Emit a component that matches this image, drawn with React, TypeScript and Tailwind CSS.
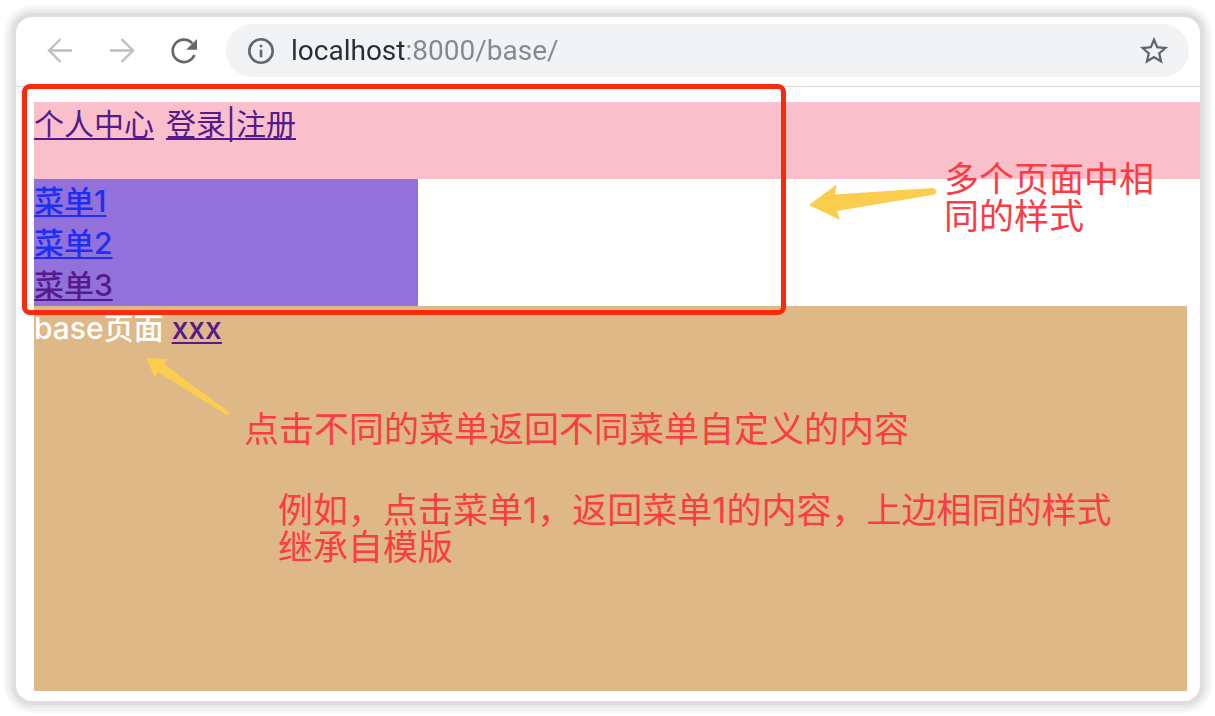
import type { ReactNode } from "react";
import { MdStarBorder } from "react-icons/md";

const visited = "text-[#551a8b] underline decoration-2 underline-offset-3 [text-decoration-skip-ink:none]";
const unvisited = "text-[#1f2ef0] underline decoration-2 underline-offset-3 [text-decoration-skip-ink:none]";

function ToolButton({ label, children }: { label: string; children: ReactNode }) {
  return (
    <button type="button" aria-label={label} className="grid size-8 shrink-0 place-items-center">
      {children}
    </button>
  );
}

function Toolbar() {
  return (
    <header className="flex items-center gap-[26px] border-b border-[#d8d8d8] pt-[7px] pr-[11px] pb-[9px] pl-7">
      <nav aria-label="Browser" className="flex items-center gap-[30px]">
        <ToolButton label="Back">
          <svg viewBox="0 0 32 32" className="size-8 fill-none stroke-[#bcbfc3]" strokeWidth="2.4">
            <path d="M28 15.500H5M16.500 4 5 15.500l11.500 11.500" />
          </svg>
        </ToolButton>
        <ToolButton label="Forward">
          <svg viewBox="0 0 32 32" className="size-8 fill-none stroke-[#bcbfc3]" strokeWidth="2.4">
            <path d="M4 15.500h23M15.500 4 27 15.500 15.500 27" />
          </svg>
        </ToolButton>
        <ToolButton label="Reload">
          <svg viewBox="0 0 32 32" className="size-8" aria-hidden="true">
            <path d="M24.200 8.300A11.200 11.200 0 1 0 26.300 20" fill="none" stroke="#63676c" strokeWidth="2.700" />
            <path d="M29 4v10.800H18.200z" fill="#63676c" />
          </svg>
        </ToolButton>
      </nav>
      <div className="flex h-[53px] min-w-0 flex-1 items-center rounded-full bg-[#f1f3f4] pr-[18px] pl-5">
        <button type="button" aria-label="Site information" className="shrink-0">
          <svg viewBox="0 0 30 30" className="size-[30px]">
            <circle cx="15" cy="15" r="11.700" fill="none" stroke="#63676c" strokeWidth="2.600" />
            <path d="M13.700 8.700h2.600v2.600h-2.600zM13.700 13.700h2.600v7.500h-2.600z" fill="#63676c" />
          </svg>
        </button>
        <input
          aria-label="Address"
          defaultValue="localhost:8000/base/"
          className="ml-[15px] h-10 min-w-0 flex-1 bg-[linear-gradient(90deg,#2a2d30_114px,#85898d_114px)] bg-clip-text font-[Roboto,sans-serif] text-[28px] text-transparent outline-none"
        />
        <button type="button" aria-label="Bookmark" className="shrink-0 text-[#63676c]">
          <MdStarBorder className="size-[34px]" />
        </button>
      </div>
    </header>
  );
}

function Note({ className, children }: { className: string; children: ReactNode }) {
  return (
    <p
      className={`absolute font-[Inter,'Noto_Sans_CJK_SC',sans-serif] text-[35px] leading-[37px] text-[#fb3c43] ${className}`}
    >
      {children}
    </p>
  );
}

export default function App() {
  return (
    <div className="flex min-h-screen flex-col bg-white pt-[17px] pr-[15px] pb-[15px] pl-4">
      <div className="flex flex-1 flex-col overflow-hidden rounded-2xl bg-white shadow-[0_0_0_4px_#dedede,0_0_0_7px_#e9e9e9,0_0_0_10px_#f3f3f3,0_0_0_12px_#f9f9f9]">
        <Toolbar />
        <main className="relative flex flex-1 flex-col pt-[15px] pb-[10px] pl-[18px] font-[Inter,'Noto_Sans_CJK_SC',sans-serif] text-[30px] leading-[42px]">
          <div className="flex h-[77px] items-start gap-3 bg-[#f9c0cb] pt-px">
            <a href="#center" className={visited}>个人中心</a>
            <a href="#login" className={visited}>登录|注册</a>
          </div>
          <nav aria-label="菜单" className="flex w-1/3 max-w-[384px] flex-col items-start bg-[#9371db] pt-px font-medium">
            <a href="#menu1" className={unvisited}>菜单1</a>
            <a href="#menu2" className={unvisited}>菜单2</a>
            <a href="#menu3" className={visited}>菜单3</a>
          </nav>
          <section className="mr-[13px] flex flex-1 items-start gap-2 bg-[#deb887] pt-px font-medium text-white">
            <span>base页面</span>
            <a href="#xxx" className={visited}>xxx</a>
          </section>

          <div className="absolute -top-[3px] left-[6px] h-[231px] w-[764px] rounded-lg border-[5px] border-[#fa2a0c]" />
          <svg viewBox="0 0 130 40" className="absolute top-[96px] left-[792px] h-10 w-[130px] fill-[#fbcd4f]" aria-hidden="true">
            <path d="M1 22 28.500 1.500 27 11.500 124 5Q128 5 128 8.500T124 12L29 28 32 37z" />
          </svg>
          <svg viewBox="0 0 90 62" className="absolute top-[268px] left-[128px] h-[62px] w-[90px] fill-[#fbcd4f]" aria-hidden="true">
            <path d="M2 3 24 4 20 9 85 57Q86 60 84 60L81 59 14 17 11 23z" />
          </svg>
          <Note className="top-[74px] left-[928px] w-[215px]">多个页面中相同的样式</Note>
          <Note className="top-[324px] left-[228px]">点击不同的菜单返回不同菜单自定义的内容</Note>
          <Note className="top-[405px] left-[262px] w-[860px]">例如，点击菜单1，返回菜单1的内容，上边相同的样式继承自模版</Note>
        </main>
      </div>
    </div>
  );
}
